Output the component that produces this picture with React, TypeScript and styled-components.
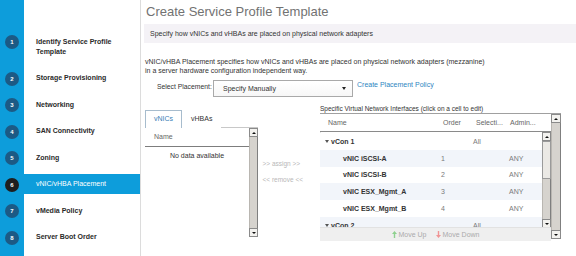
import React from "react";
import styled, { createGlobalStyle } from "styled-components";

const Global = createGlobalStyle`
  html, body { margin: 0; padding: 0; background: #fff; }
  body { font-family: "Liberation Sans", Arial, sans-serif; width: 576px; height: 256px; overflow: hidden; }
  #root { width: 576px; height: 256px; }
`;

const Page = styled.div`
  display: flex;
  width: 576px;
  height: 256px;
  overflow: hidden;
`;

/* ---------- Sidebar ---------- */
const Sidebar = styled.nav`
  width: 140px;
  flex: none;
  border-right: 1px solid #dcdcdc;
  background: linear-gradient(to right, #0d9ddb 0 24px, #fff 24px);
  padding-top: 28.5px;
`;

const Step = styled.div`
  padding: 2.9px 0;
`;

const StepRow = styled.div<{ $active?: boolean }>`
  display: flex;
  align-items: flex-start;
  padding: 5.35px 0;
  line-height: 10px;
  background: ${(p) => (p.$active ? "#0d9ddb" : "transparent")};
`;

const Badge = styled.span<{ $active?: boolean }>`
  flex: none;
  width: 14px;
  height: 14px;
  border-radius: 50%;
  margin: -1.5px 0 -2.5px 5px;
  background: ${(p) => (p.$active ? "#1e1e1e" : "#1c5a85")};
  color: #fff;
  font-size: 6px;
  font-weight: 700;
  line-height: 1;
  display: flex;
  align-items: center;
  justify-content: center;
`;

const StepLabel = styled.span<{ $active?: boolean }>`
  margin-left: 17px;
  font-size: 7px;
  font-weight: ${(p) => (p.$active ? 400 : 700)};
  color: ${(p) => (p.$active ? "#fff" : "#2a2a2a")};
`;

/* ---------- Main ---------- */
const Main = styled.main`
  flex: 1;
  min-width: 0;
  padding-left: 4px;
  display: flex;
  flex-direction: column;
`;

const Title = styled.h1`
  margin: 0;
  height: 24px;
  line-height: 24px;
  padding-left: 1px;
  font-size: 13px;
  font-weight: 400;
  color: #727272;
`;

const Banner = styled.div`
  margin-left: -1px;
  height: 19px;
  line-height: 19px;
  padding-left: 6px;
  background: #f4f2f6;
  font-size: 7px;
  color: #333;
`;

const Intro = styled.p`
  margin: 13.5px 0 0;
  font-size: 7px;
  line-height: 9px;
  color: #333;
`;

const SelectRow = styled.div`
  display: flex;
  align-items: flex-start;
  margin-top: 5.5px;
  padding-left: 12px;
  height: 17px;
`;

const FieldLabel = styled.span`
  flex: none;
  width: 56px;
  margin-top: 2px;
  white-space: nowrap;
  font-size: 6.8px;
  line-height: 9px;
  color: #333;
`;

const SelectBox = styled.div`
  flex: none;
  width: 140px;
  height: 17px;
  box-sizing: border-box;
  border: 1px solid #a9a9a9;
  background: linear-gradient(#fff, #f7f7f7);
  display: flex;
  align-items: center;
  justify-content: space-between;
  padding: 0 6px 0 9px;
  font-size: 7px;
  color: #333;
`;

const Caret = styled.span`
  width: 0;
  height: 0;
  border-left: 2.5px solid transparent;
  border-right: 2.5px solid transparent;
  border-top: 3.5px solid #222;
`;

const Link = styled.a`
  margin-left: 4px;
  font-size: 7px;
  line-height: 9px;
  color: #2e86c1;
  text-decoration: none;
  white-space: nowrap;
`;

const Panels = styled.div`
  display: flex;
  align-items: flex-start;
  margin-top: 7px;
`;

/* left panel */
const LeftPanel = styled.div`
  width: 113px;
  flex: none;
  padding-top: 6px;
`;

const Tabs = styled.div`
  display: flex;
  height: 17px;
`;

const Tab = styled.div<{ $active?: boolean }>`
  position: relative;
  z-index: 1;
  box-sizing: border-box;
  height: 18px;
  padding: 0 8px;
  line-height: 16px;
  font-size: 7px;
  background: #fff;
  color: ${(p) => (p.$active ? "#3a7eb6" : "#333")};
  border: 1px solid ${(p) => (p.$active ? "#a7bccd" : "transparent")};
  border-bottom: none;
`;

const TableBox = styled.div`
  display: flex;
  height: 109px;
  border-top: 1px solid #c8c8c8;
`;

const TableColumn = styled.div`
  flex: 1;
  min-width: 0;
`;

const HeadCell = styled.div`
  height: 18px;
  line-height: 18px;
  padding-left: 9px;
  border-bottom: 1.5px solid #7d7d7d;
  font-size: 7px;
  color: #666;
`;

const Empty = styled.div`
  margin-top: 4px;
  text-align: center;
  font-size: 7px;
  line-height: 9px;
  color: #333;
`;

/* scrollbars */
const ScrollTrack = styled.div<{ $w: number; $h: number }>`
  flex: none;
  width: ${(p) => p.$w}px;
  height: ${(p) => p.$h}px;
  box-sizing: border-box;
  display: flex;
  flex-direction: column;
  background: #d6d3ce;
  border-left: 1px solid #b9b6b1;
  border-right: 1px solid #7f7f7f;
`;

const ScrollBtn = styled.div`
  flex: none;
  height: 9px;
  margin: 0 -1px;
  box-sizing: border-box;
  background: #f3f2ef;
  border: 1px solid #8a8a8a;
  display: flex;
  align-items: center;
  justify-content: center;
`;

const Tri = styled.span<{ $down?: boolean }>`
  width: 0;
  height: 0;
  border-left: 2px solid transparent;
  border-right: 2px solid transparent;
  ${(p) => (p.$down ? "border-top: 2.5px solid #111;" : "border-bottom: 2.5px solid #111;")}
`;

const Thumb = styled.div`
  flex: none;
  height: 38px;
  margin: 0 -1px;
  box-sizing: border-box;
  background: #ebe9e5;
  border: 1px solid #9a9a9a;
`;

const Fill = styled.div`
  flex: 1;
`;

/* middle */
const Transfer = styled.div`
  width: 61px;
  flex: none;
  box-sizing: border-box;
  padding: 54.5px 0 0 4.5px;
  display: flex;
  flex-direction: column;
  gap: 7px;
`;

const TransferBtn = styled.span`
  font-size: 6.5px;
  line-height: 9px;
  color: #b8b8b8;
`;

/* right panel */
const RightPanel = styled.div`
  width: 242px;
  flex: none;
  box-sizing: border-box;
  padding-left: 1px;
`;

const Caption = styled.div`
  font-size: 6.5px;
  line-height: 9px;
  color: #333;
`;

const OuterBox = styled.div`
  display: flex;
  height: 127px;
  border-top: 1px solid #a0a0a0;
`;

const TableArea = styled.div`
  flex: 1;
  min-width: 0;
  display: flex;
  flex-direction: column;
`;

const cols = "117px 33px 36px 1fr";

const HeaderRow = styled.div`
  display: grid;
  grid-template-columns: ${cols};
  height: 17px;
  line-height: 17px;
  border-bottom: 1px solid #8a8a8a;
  font-size: 7px;
  color: #666;
`;

const Cell = styled.div<{ $pad: number; $bold?: boolean; $dark?: boolean }>`
  padding-left: ${(p) => p.$pad}px;
  white-space: nowrap;
  overflow: hidden;
  font-weight: ${(p) => (p.$bold ? 700 : 400)};
  color: ${(p) => (p.$dark ? "#333" : "inherit")};
  display: flex;
  align-items: center;
`;

const Body = styled.div`
  display: flex;
  height: 96px;
  overflow: hidden;
`;

const Rows = styled.div`
  flex: 1;
  min-width: 0;
  padding-top: 1px;
  box-shadow: inset 1px 0 #e4e4e4;
`;

const Row = styled.div<{ $shade?: boolean }>`
  display: grid;
  grid-template-columns: ${cols};
  height: 16.8px;
  font-size: 7px;
  color: #7a7a7a;
  background: ${(p) => (p.$shade ? "#f2f5fa" : "#fff")};
`;

const Expander = styled.span`
  width: 0;
  height: 0;
  margin-right: 2px;
  border-left: 2px solid transparent;
  border-right: 2px solid transparent;
  border-top: 3px solid #555;
`;

const MoveBar = styled.div`
  flex: none;
  height: 13px;
  background: #efefef;
  border-top: 1px solid #e2e2e2;
  display: flex;
  align-items: center;
  justify-content: center;
  gap: 9px;
  font-size: 7px;
  color: #ababab;
`;

const MoveBtn = styled.span`
  display: flex;
  align-items: center;
  gap: 2px;
`;

const Arrow = ({ up, color }: { up?: boolean; color: string }) => (
  <svg width="5" height="7" viewBox="0 0 5 7" style={{ transform: up ? undefined : "rotate(180deg)" }}>
    <path d="M2.5 0 L5 3 L3.2 3 L3.2 7 L1.8 7 L1.8 3 L0 3 Z" fill={color} />
  </svg>
);

const Scrollbar = ({ w, h, thumb }: { w: number; h: number; thumb?: boolean }) => (
  <ScrollTrack $w={w} $h={h}>
    <ScrollBtn>
      <Tri />
    </ScrollBtn>
    {thumb && <Thumb />}
    <Fill />
    <ScrollBtn>
      <Tri $down />
    </ScrollBtn>
  </ScrollTrack>
);

const steps = [
  "Identify Service Profile Template",
  "Storage Provisioning",
  "Networking",
  "SAN Connectivity",
  "Zoning",
  "vNIC/vHBA Placement",
  "vMedia Policy",
  "Server Boot Order",
];

type VRow = { name: string; group?: boolean; order?: string; sel?: string; admin?: string };
const rows: VRow[] = [
  { name: "vCon 1", group: true, sel: "All" },
  { name: "vNIC iSCSI-A", order: "1", admin: "ANY" },
  { name: "vNIC iSCSI-B", order: "2", admin: "ANY" },
  { name: "vNIC ESX_Mgmt_A", order: "3", admin: "ANY" },
  { name: "vNIC ESX_Mgmt_B", order: "4", admin: "ANY" },
  { name: "vCon 2", group: true, sel: "All" },
];

export default function App() {
  return (
    <>
      <Global />
      <Page>
        <Sidebar>
          {steps.map((s, i) => {
            const active = i === 5;
            const lines = i === 0 ? ["Identify Service Profile", "Template"] : [s];
            return (
              <Step key={s}>
                <StepRow $active={active}>
                  <Badge $active={active}>{i + 1}</Badge>
                  <StepLabel $active={active}>
                    {lines.map((l, j) => (
                      <React.Fragment key={l}>
                        {j > 0 && <br />}
                        {l}
                      </React.Fragment>
                    ))}
                  </StepLabel>
                </StepRow>
              </Step>
            );
          })}
        </Sidebar>
        <Main>
          <Title>Create Service Profile Template</Title>
          <Banner>Specify how vNICs and vHBAs are placed on physical network adapters</Banner>
          <Intro>
            vNIC/vHBA Placement specifies how vNICs and vHBAs are placed on physical network adapters (mezzanine)
            <br />
            in a server hardware configuration independent way.
          </Intro>
          <SelectRow>
            <FieldLabel>Select Placement:</FieldLabel>
            <SelectBox>
              <span>Specify Manually</span>
              <Caret />
            </SelectBox>
            <Link href="#">Create Placement Policy</Link>
          </SelectRow>
          <Panels>
            <LeftPanel>
              <Tabs>
                <Tab $active>vNICs</Tab>
                <Tab>vHBAs</Tab>
              </Tabs>
              <TableBox>
                <TableColumn>
                  <HeadCell>Name</HeadCell>
                  <Empty>No data available</Empty>
                </TableColumn>
                <Scrollbar w={9} h={109} />
              </TableBox>
            </LeftPanel>
            <Transfer>
              <TransferBtn>&gt;&gt; assign &gt;&gt;</TransferBtn>
              <TransferBtn>&lt;&lt; remove &lt;&lt;</TransferBtn>
            </Transfer>
            <RightPanel>
              <Caption>Specific Virtual Network Interfaces (click on a cell to edit)</Caption>
              <OuterBox>
                <TableArea>
                  <HeaderRow>
                    <Cell $pad={8}>Name</Cell>
                    <Cell $pad={6}>Order</Cell>
                    <Cell $pad={6}>Selecti...</Cell>
                    <Cell $pad={4}>Admin...</Cell>
                  </HeaderRow>
                  <Body>
                    <Rows>
                      {rows.map((r, i) => (
                        <Row key={r.name} $shade={i % 2 === 1}>
                          <Cell $pad={r.group ? 5 : 23} $bold $dark>
                            {r.group && <Expander />}
                            {r.name}
                          </Cell>
                          <Cell $pad={4}>{r.order}</Cell>
                          <Cell $pad={3}>{r.sel}</Cell>
                          <Cell $pad={3}>{r.admin}</Cell>
                        </Row>
                      ))}
                    </Rows>
                    <Scrollbar w={9} h={96} thumb />
                  </Body>
                  <MoveBar>
                    <MoveBtn>
                      <Arrow up color="#8fd18f" />
                      Move Up
                    </MoveBtn>
                    <MoveBtn>
                      <Arrow color="#f09494" />
                      Move Down
                    </MoveBtn>
                  </MoveBar>
                </TableArea>
                <Scrollbar w={10} h={125} />
              </OuterBox>
            </RightPanel>
          </Panels>
        </Main>
      </Page>
    </>
  );
}
